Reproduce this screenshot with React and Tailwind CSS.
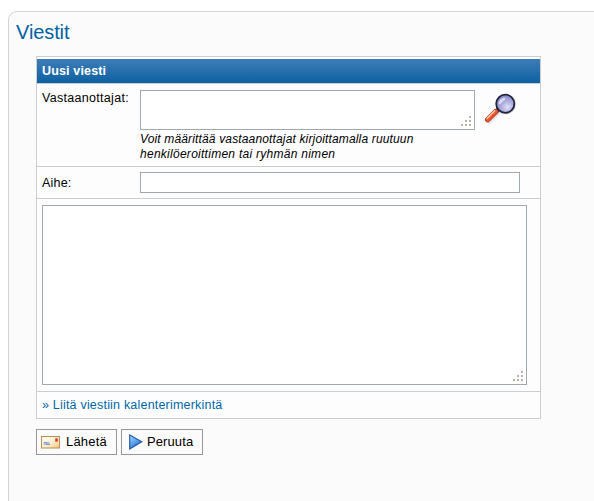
function Grip({ className }) {
  return (
    <svg className={className} width="10" height="10" viewBox="0 0 10 10" fill="#b5b6a2" shapeRendering="crispEdges">
      <path d="M8 0h2v2h-2zM4 4h2v2h-2zM8 4h2v2h-2zM0 8h2v2h-2zM4 8h2v2h-2zM8 8h2v2h-2z" />
    </svg>
  );
}

function SearchIcon() {
  return (
    <svg width="34" height="34" viewBox="0 0 34 34">
      <defs>
        <radialGradient id="lens" cx="0.62" cy="0.68" r="0.7">
          <stop offset="0" stopColor="#e0e0fa" />
          <stop offset="0.5" stopColor="#aaaadb" />
          <stop offset="1" stopColor="#8587c1" />
        </radialGradient>
      </defs>
      <path d="M5 31L16 20" stroke="#e4e4e4" strokeWidth="3" strokeLinecap="round" />
      <circle cx="22.3" cy="12.8" r="9.8" fill="#e4e4e8" />
      <path d="M12.2 16.7l3 3" stroke="#20213d" strokeWidth="4" />
      <path d="M11.8 19.6L3.7 27.7" stroke="#a93b23" strokeWidth="5.4" strokeLinecap="round" />
      <path d="M11.8 19.6L3.7 27.7" stroke="#ee572e" strokeWidth="3.8" strokeLinecap="round" />
      <path d="M10.8 18.7L3 26.5" stroke="#ffd0b5" strokeWidth="1.3" strokeLinecap="round" />
      <circle cx="21.3" cy="11.8" r="9.1" fill="url(#lens)" stroke="#22233f" strokeWidth="1.8" />
      <path d="M14.6 12.3c0-4 2.8-6.5 6.2-6.5 1.2 0 .8 1.6-.8 2.6-1.9 1.2-2 3.4-5.4 3.9z" fill="#d9daf6" />
    </svg>
  );
}

function MailIcon() {
  return (
    <svg width="19" height="13" viewBox="0 0 19 13">
      <defs>
        <linearGradient id="paper" x1="0" y1="0" x2="1" y2="1">
          <stop offset="0" stopColor="#fffdf5" />
          <stop offset="0.5" stopColor="#fff0d2" />
          <stop offset="1" stopColor="#f5c680" />
        </linearGradient>
      </defs>
      <rect x="0.5" y="0.5" width="18" height="11.5" fill="url(#paper)" stroke="#b98e50" />
      <path d="M2.5 6h6v3h-6z" fill="#a9bfde" />
      <path d="M3 6.5h3M5 8.5h4" stroke="#7898c8" />
      <rect x="14" y="2" width="3" height="4" fill="#f3a391" />
      <rect x="14.5" y="2.5" width="2" height="3" fill="#d9341f" />
    </svg>
  );
}

function PlayIcon() {
  return (
    <svg width="14" height="16" viewBox="0 0 14 16">
      <defs>
        <linearGradient id="play" x1="0" y1="0" x2="0.5" y2="1">
          <stop offset="0" stopColor="#b5dbff" />
          <stop offset="0.5" stopColor="#68aaf0" />
          <stop offset="1" stopColor="#2468c3" />
        </linearGradient>
      </defs>
      <path d="M0.7 0.9L12.8 7.7 0.7 15z" fill="url(#play)" stroke="#1f57a9" strokeWidth="1.1" />
    </svg>
  );
}

export default function App() {
  return (
    <div className="h-[501px] w-[594px] overflow-hidden bg-white pl-2 pt-[11px] font-['Liberation_Sans',Arial,sans-serif] text-[12.5px] text-black">
      <main className="h-[520px] w-[620px] rounded-tl-[9px] border border-[#d3d4d5] bg-[#fbfbfb] pl-[27px]">
        <h1 className="-ml-5 h-[44px] pt-[8px] text-[20px] leading-[24px] tracking-[-0.1px] text-[#0061a3]">Viestit</h1>
        <section className="w-[505px] border border-[#cccdce] bg-[#fdfdfd]">
          <header className="mt-[2px] h-6 bg-linear-to-b from-[#3c7db7] to-[#0861a2] pl-[5px] leading-[24px] font-bold text-white">
            <span className="tracking-[0.15px]">Uusi viesti</span>
          </header>
          <div className="flex h-[83px] border-t border-[#cccdce] pl-[5px] pt-[6px]">
            <label className="w-[98px] pt-[1px] leading-[15px] tracking-[0.3px]">Vastaanottajat:</label>
            <div className="w-[335px]">
              <div className="flex h-10 items-end justify-end border border-[#a0a8ae] bg-white p-[3px]"><Grip /></div>
              <p className="pt-[2px] text-[12px] leading-[15px] italic whitespace-nowrap tracking-[0.15px]">
                Voit määrittää vastaanottajat kirjoittamalla ruutuun<br />
                <span className="tracking-[0.27px]">henkilöeroittimen tai ryhmän nimen</span>
              </p>
            </div>
            <div className="pl-[9px] pt-[2px]"><SearchIcon /></div>
          </div>
          <div className="flex h-8 border-t border-[#cccdce] pl-[5px] pt-[5px]">
            <label className="w-[98px] pt-[4px] leading-[15px] tracking-[0.2px]">Aihe:</label>
            <div className="h-[21px] w-[380px] border border-[#a0a8ae] bg-white" />
          </div>
          <div className="h-[193px] border-t border-[#cccdce] pl-[5px] pt-[6px]">
            <div className="flex h-[180px] w-[485px] items-end justify-end border border-[#a0a8ae] bg-white p-[3px]"><Grip /></div>
          </div>
          <div className="h-[27px] border-t border-[#cccdce] pl-[5px] pt-[6px] leading-[15px] tracking-[0.2px] text-[#0067a9]">
            » Liitä viestiin kalenterimerkintä
          </div>
        </section>
        <div className="mt-[10px] flex gap-1 text-[13px]">
          <button className="flex h-[26px] w-[81px] items-center border border-[#95979a] bg-[#fbfbfb] pl-[4px]">
            <MailIcon /><span className="ml-[6px] tracking-[0.2px]">Lähetä</span>
          </button>
          <button className="flex h-[26px] w-[82px] items-center border border-[#95979a] bg-[#fbfbfb] pl-[7px]">
            <PlayIcon /><span className="ml-[4px] tracking-[0.1px]">Peruuta</span>
          </button>
        </div>
      </main>
    </div>
  );
}
